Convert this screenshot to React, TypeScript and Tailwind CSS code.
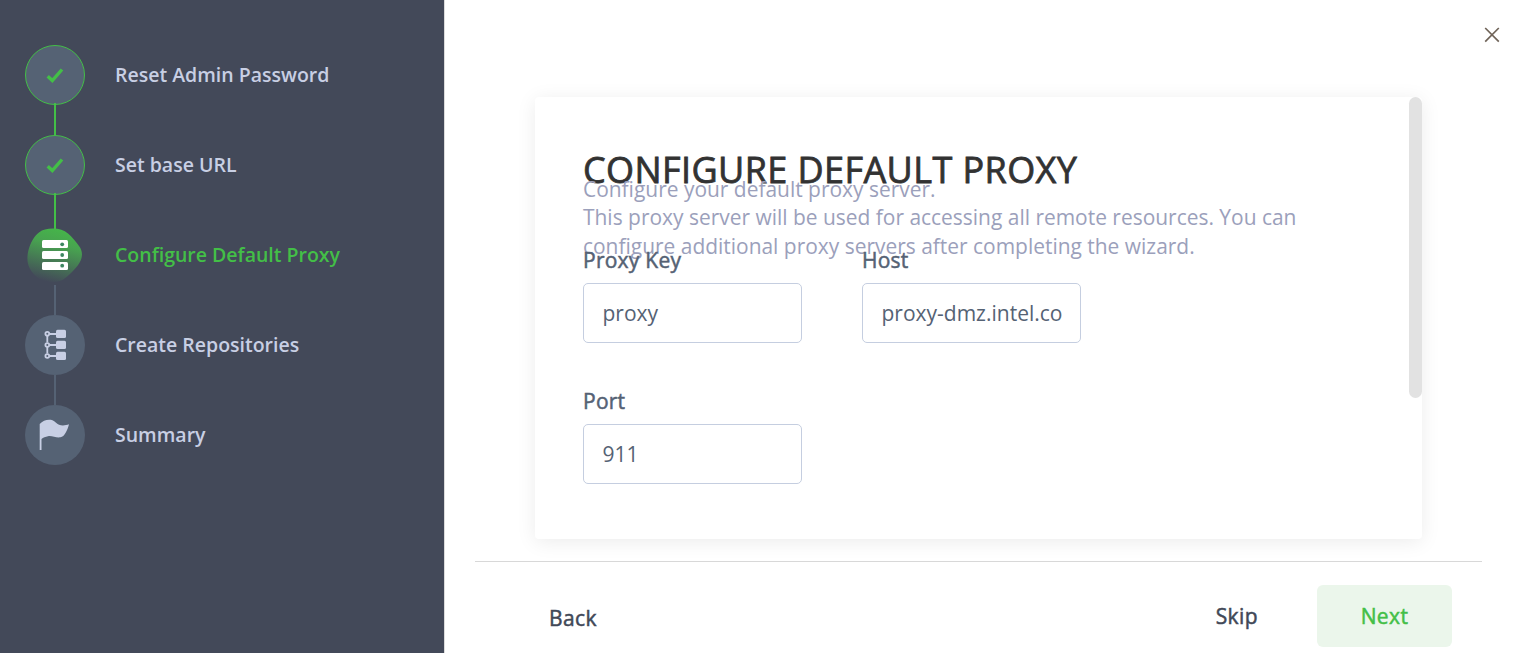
import type { ReactNode } from "react";

const Check = () => (
  <svg width="20" height="18" viewBox="0 0 20 18" fill="none">
    <path d="M2.7 10.3 7.3 14.500 17 3.500" stroke="#43bf47" strokeWidth="3.4" />
  </svg>
);

const Server = () => (
  <svg className="shrink-0" width="60" height="60" viewBox="0 0 60 60">
    <defs>
      <linearGradient id="blob" x1="0.65" y1="0" x2="0.4" y2="1">
        <stop offset="0" stopColor="#45b649" />
        <stop offset="0.3" stopColor="#48a350" />
        <stop offset="1" stopColor="#434959" />
      </linearGradient>
    </defs>
    <path
      d="M28 3.500C34 3.500 39 5 43 8.500C47 12 51 17 54 21C57 25 57.500 29 56.500 33C55 39 50 44 46 48C41 53 36 57 29 57C21 58 12 54 7 47C2 41 1.500 33 3.500 25C5.500 18 9 11 14 7.500C17.500 4.500 22 3.500 28 3.500Z"
      fill="url(#blob)"
    />
    <g fill="#fff">
      <rect x="17" y="15" width="26" height="8" rx="1.5" />
      <rect x="17" y="26" width="26" height="8" rx="1.5" />
      <rect x="17" y="37" width="26" height="8" rx="1.5" />
    </g>
    <g fill="#3c8660">
      <circle cx="37.2" cy="19.3" r="1.9" />
      <circle cx="37.2" cy="30" r="1.9" />
      <circle cx="37.2" cy="40.7" r="1.9" />
    </g>
  </svg>
);

const Repos = () => (
  <svg width="60" height="60" viewBox="0 0 60 60" fill="none" stroke="#c8cfe4" strokeWidth="1.8">
    <path d="M22.3 21v6.500M22.300 32v6.500M24.500 19H32M24.500 30H32M24.500 41H32" />
    <circle cx="22.300" cy="18.800" r="1.900" />
    <circle cx="22.300" cy="30" r="1.900" />
    <circle cx="22.300" cy="41" r="1.900" />
    <g fill="#c8cfe4" stroke="none">
      <rect x="31" y="14.700" width="10" height="8.300" rx="1.500" />
      <rect x="31" y="25.800" width="10" height="8.300" rx="1.500" />
      <rect x="31" y="36.700" width="10" height="8.300" rx="1.500" />
    </g>
  </svg>
);

const Flag = () => (
  <svg width="60" height="60" viewBox="0 0 60 60" fill="#c8cfe4">
    <path d="M14.700 19C18 15.500 23 14 27.500 15.300C30 16.100 31.500 18.800 34 19.800C37 21 41 20.500 44 19.300C42.500 25 39.500 32 35.500 32.300C31 33 27 30.500 23 31.200C20.500 31.600 18.200 32.500 16.500 34V45H14.700Z" />
  </svg>
);

type Step = { label: string; icon: ReactNode; state: "done" | "active" | "todo" };

const steps: Step[] = [
  { label: "Reset Admin Password", icon: <Check />, state: "done" },
  { label: "Set base URL", icon: <Check />, state: "done" },
  { label: "Configure Default Proxy", icon: <Server />, state: "active" },
  { label: "Create Repositories", icon: <Repos />, state: "todo" },
  { label: "Summary", icon: <Flag />, state: "todo" },
];

const circle = {
  done: "rounded-full border border-[#43bf47] bg-[#556274]",
  active: "",
  todo: "rounded-full bg-[#556274]",
};

const connectors = [
  "-mt-[2px] h-[33px] bg-[#43bf47]",
  "-mt-[2px] h-[36px] -mb-[4px] bg-[#43bf47]",
  "h-[30px] bg-[#556274]",
  "h-[30px] bg-[#556274]",
];

function Field({ label, value }: { label: string; value: string }) {
  return (
    <label className="flex w-[219px] flex-col">
      <span className="h-[37px] text-[21px] leading-7 tracking-[0.25px] text-[#556274] [-webkit-text-stroke:0.5px_#556274]">
        {label}
      </span>
      <input
        readOnly
        value={value}
        className="h-[60px] w-full rounded-[5px] border border-[#c5cee0] bg-white px-[18.500px] text-[21px] text-[#556274] outline-none"
      />
    </label>
  );
}

export default function App() {
  return (
    <div className="flex h-[653px] w-full overflow-hidden bg-white font-['Open_Sans',sans-serif]">
      <aside className="w-[444px] shrink-0 bg-[#434959] pt-[45px] pl-[25px]">
        {steps.map((step, i) => (
          <div key={step.label} className="flex h-[90px] items-start">
            <div className="flex w-[60px] flex-col items-center">
              <div className={`flex h-[60px] w-[60px] shrink-0 items-center justify-center ${circle[step.state]}`}>
                {step.icon}
              </div>
              {i < steps.length - 1 && <div className={`w-[2px] shrink-0 ${connectors[i]}`} />}
            </div>
            <span
              className={`ml-[30px] text-[19.500px] leading-[60px] font-semibold ${step.state === "active" ? "text-[#43bf47]" : "text-[#c8cfe4]"}`}
            >
              {step.label}
            </span>
          </div>
        ))}
      </aside>

      <main className="flex flex-1 flex-col border-l border-[#dcdcdc]">
        <div className="flex h-[97px] shrink-0 justify-end pt-[27px] pr-[13px]">
          <button aria-label="Close" className="h-4 w-4">
            <svg width="16" height="16" viewBox="0 0 16 16" stroke="#706459" strokeWidth="1.700">
              <path d="M1.200 1 14.800 14.600M14.800 1 1.200 14.600" />
            </svg>
          </button>
        </div>

        <section className="ml-[90px] flex h-[442px] w-[887px] shrink-0 justify-between rounded-[4px] shadow-[0_3px_20px_rgba(0,0,0,0.08)]">
          <div className="w-[760px] pt-[48px] pl-[48px]">
            <h1 className="h-[50px] text-[36px] leading-[50px] tracking-[0.41px] whitespace-nowrap text-[#323232] [-webkit-text-stroke:0.8px_#323232]">
              CONFIGURE DEFAULT PROXY
            </h1>
            <p className="-mt-[20px] h-[86px] text-[20.950px] leading-[28.400px] whitespace-nowrap text-[#9ba0bb]">
              Configure your default proxy server.
              <br />
              This proxy server will be used for accessing all remote resources. You can
              <br />
              configure additional proxy servers after completing the wizard.
            </p>
            <form className="-mt-[15px] grid grid-cols-[219px_219px] gap-x-[60px] gap-y-[44px]">
              <Field label="Proxy Key" value="proxy" />
              <Field label="Host" value="proxy-dmz.intel.co" />
              <Field label="Port" value="911" />
            </form>
          </div>
          <div className="h-[301px] w-[13px] rounded-full bg-[#e2e2e2]" />
        </section>

        <footer className="mt-[22px] mr-[31px] ml-[30px] flex h-[92px] items-start justify-between border-t border-[#d8d8d8] pt-[23px] pr-[30px] pl-[74px] text-[21px] tracking-[0.4px] text-[#414857] [-webkit-text-stroke:0.5px_currentColor]">
          <button className="mt-[2px] h-[62px] pt-[2px]">Back</button>
          <div className="flex">
            <button className="mr-[59px] h-[62px] pt-[2px]">Skip</button>
            <button className="h-[62px] w-[135px] rounded-[6px] bg-[#ebf6eb] pt-[2px] text-[#43bf47]">Next</button>
          </div>
        </footer>
      </main>
    </div>
  );
}
